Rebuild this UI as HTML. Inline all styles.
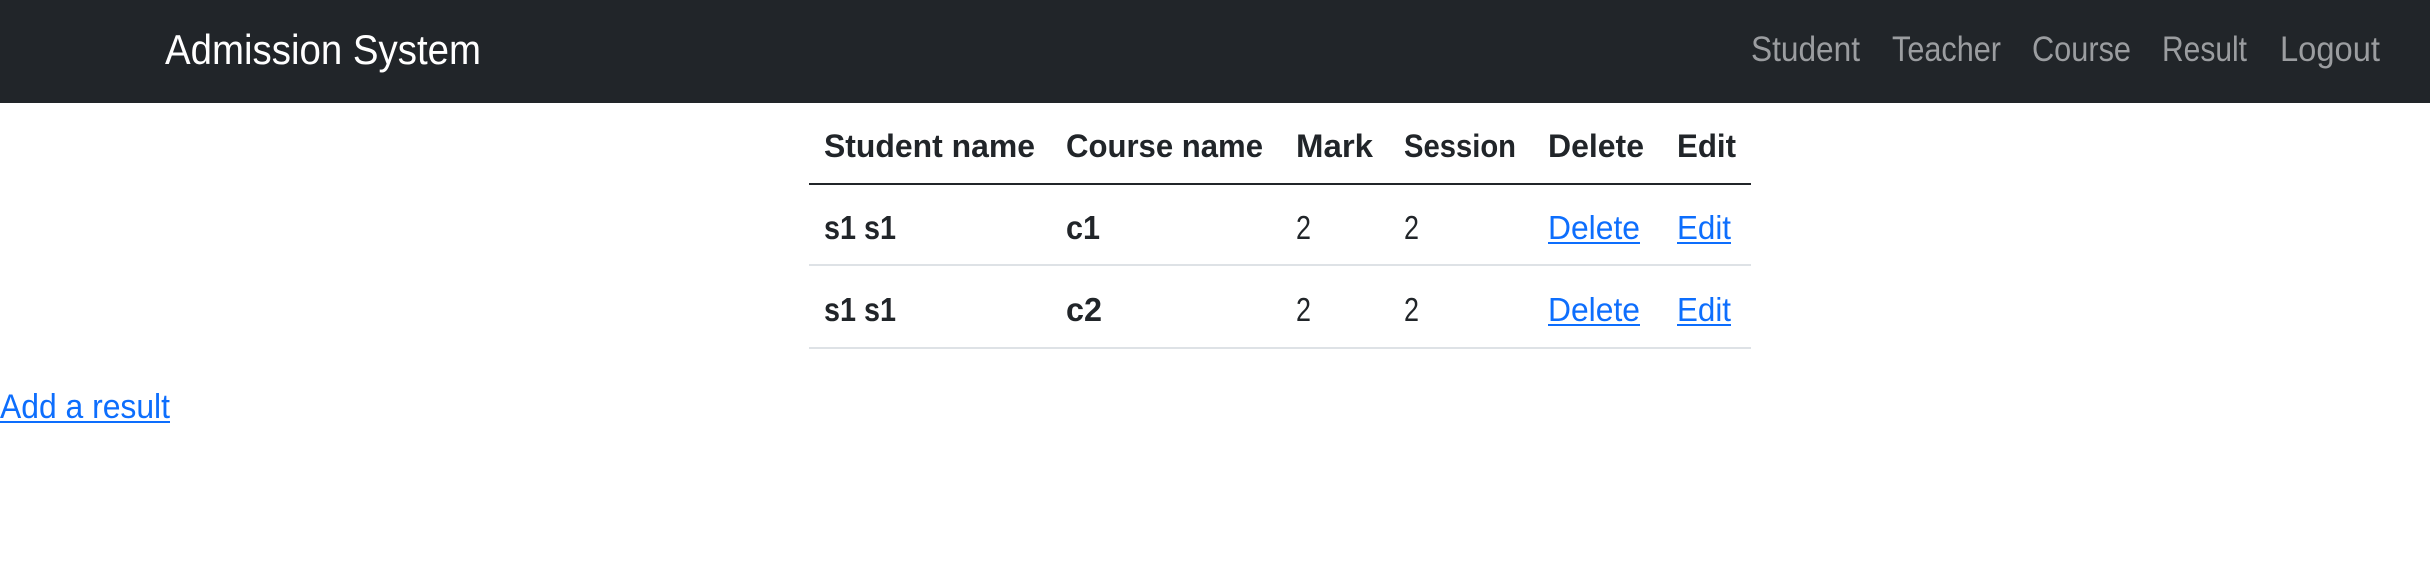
<!DOCTYPE html>
<html><head><meta charset="utf-8"><style>html,body{margin:0;padding:0;background:#fff;width:2430px;height:583px;overflow:hidden}</style></head>
<body>
<svg width="2430" height="583" viewBox="0 0 2430 583" xmlns="http://www.w3.org/2000/svg" font-family="Liberation Sans, sans-serif">
<rect x="0" y="0" width="2430" height="103" fill="#212529"/>
<text x="165" y="64" font-size="42" fill="#fff" textLength="316" lengthAdjust="spacingAndGlyphs">Admission System</text>
<g font-size="35" fill="#9b9da0">
<text x="1751" y="61" textLength="109" lengthAdjust="spacingAndGlyphs">Student</text>
<text x="1892" y="61" textLength="109" lengthAdjust="spacingAndGlyphs">Teacher</text>
<text x="2032" y="61" textLength="99" lengthAdjust="spacingAndGlyphs">Course</text>
<text x="2162" y="61" textLength="85" lengthAdjust="spacingAndGlyphs">Result</text>
<text x="2280" y="61" textLength="100" lengthAdjust="spacingAndGlyphs">Logout</text>
</g>
<g font-size="32" font-weight="bold" fill="#212529">
<text x="824" y="157" textLength="211" lengthAdjust="spacingAndGlyphs">Student name</text>
<text x="1066" y="157" textLength="197" lengthAdjust="spacingAndGlyphs">Course name</text>
<text x="1296" y="157" textLength="77" lengthAdjust="spacingAndGlyphs">Mark</text>
<text x="1404" y="157" textLength="112" lengthAdjust="spacingAndGlyphs">Session</text>
<text x="1548" y="157" textLength="96" lengthAdjust="spacingAndGlyphs">Delete</text>
<text x="1677" y="157" textLength="59" lengthAdjust="spacingAndGlyphs">Edit</text>
</g>
<rect x="809" y="183" width="942" height="2" fill="#212529"/>
<rect x="809" y="264" width="942" height="2" fill="#dee2e6"/>
<rect x="809" y="347" width="942" height="2" fill="#dee2e6"/>
<g font-size="33" fill="#212529">
<text x="824" y="239" font-weight="bold" textLength="72" lengthAdjust="spacingAndGlyphs">s1 s1</text>
<text x="1066" y="239" font-weight="bold" textLength="34" lengthAdjust="spacingAndGlyphs">c1</text>
<text x="1296" y="239" textLength="15" lengthAdjust="spacingAndGlyphs">2</text>
<text x="1404" y="239" textLength="15" lengthAdjust="spacingAndGlyphs">2</text>
<text x="824" y="321" font-weight="bold" textLength="72" lengthAdjust="spacingAndGlyphs">s1 s1</text>
<text x="1066" y="321" font-weight="bold" textLength="36" lengthAdjust="spacingAndGlyphs">c2</text>
<text x="1296" y="321" textLength="15" lengthAdjust="spacingAndGlyphs">2</text>
<text x="1404" y="321" textLength="15" lengthAdjust="spacingAndGlyphs">2</text>
</g>
<g font-size="33" fill="#0d6efd">
<text x="1548" y="239" textLength="92" lengthAdjust="spacingAndGlyphs">Delete</text>
<text x="1677" y="239" textLength="54" lengthAdjust="spacingAndGlyphs">Edit</text>
<text x="1548" y="321" textLength="92" lengthAdjust="spacingAndGlyphs">Delete</text>
<text x="1677" y="321" textLength="54" lengthAdjust="spacingAndGlyphs">Edit</text>
<rect x="1548" y="242" width="92" height="2"/>
<rect x="1677" y="242" width="54" height="2"/>
<rect x="1548" y="324" width="92" height="2"/>
<rect x="1677" y="324" width="54" height="2"/>
<text x="0" y="418" font-size="34" textLength="170" lengthAdjust="spacingAndGlyphs">Add a result</text>
<rect x="0" y="421" width="170" height="2"/>
</g>
</svg>
</body></html>
